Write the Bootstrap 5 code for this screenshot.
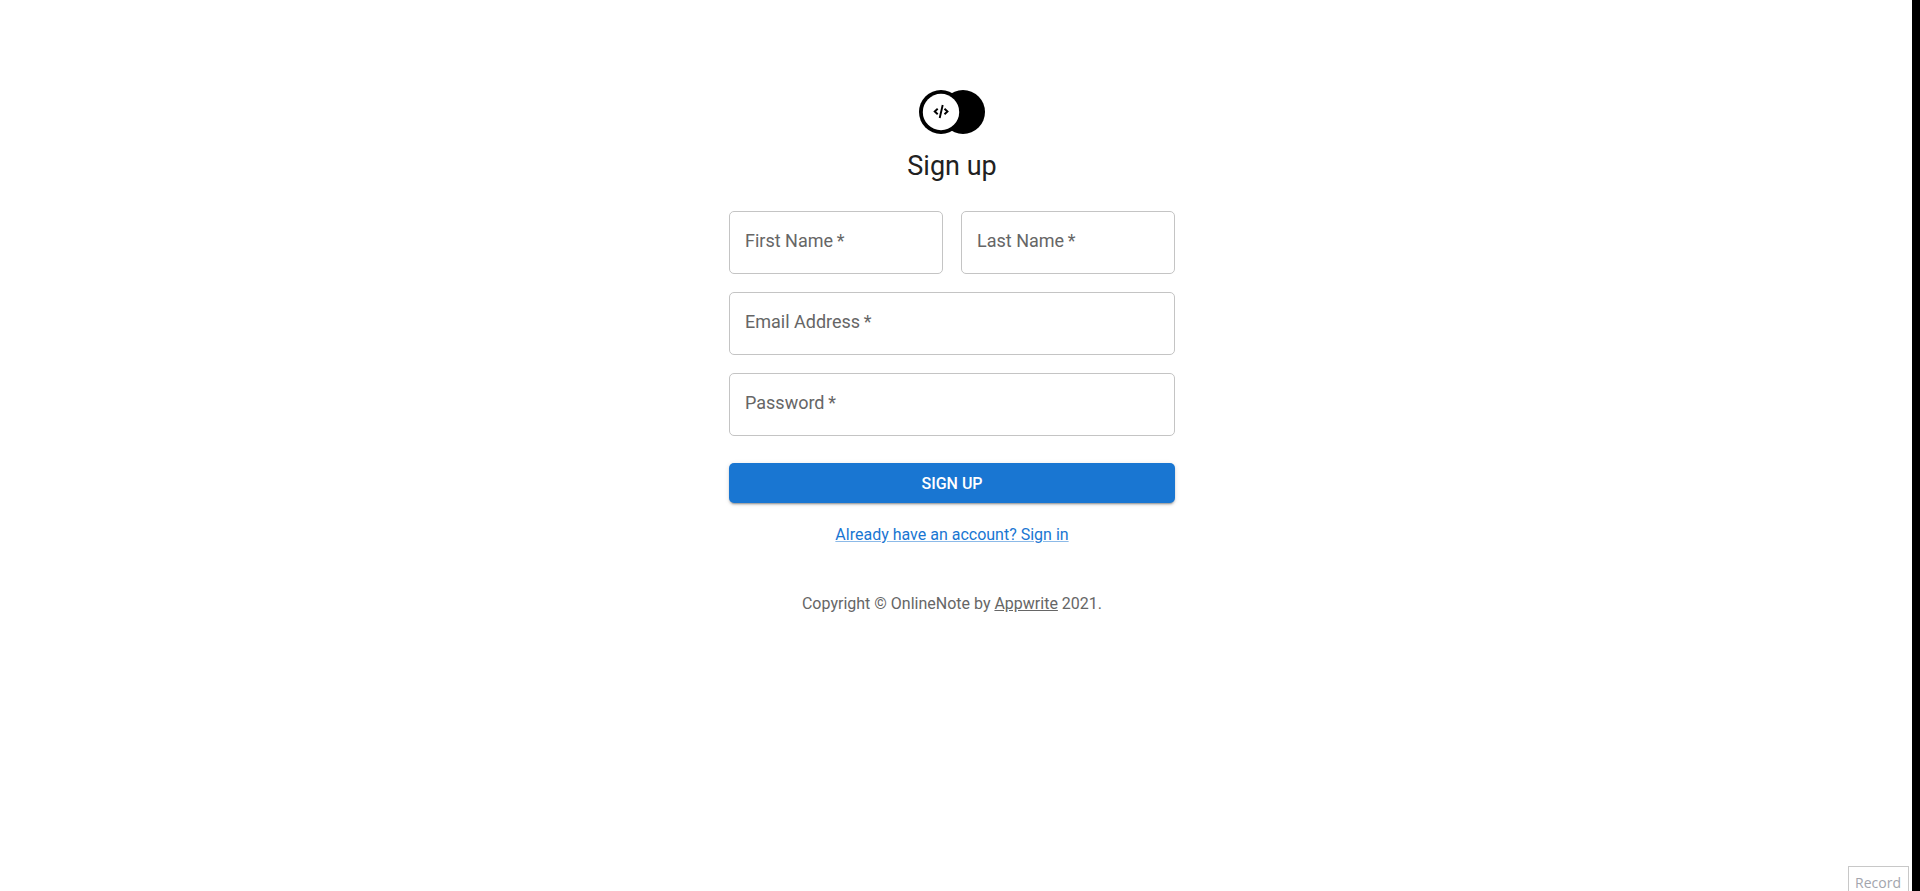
<!DOCTYPE html>
<html lang="en">
<head>
<meta charset="utf-8">
<meta name="viewport" content="width=device-width, initial-scale=1">
<title>Sign up</title>
<link href="https://cdn.jsdelivr.net/npm/bootstrap@5.3.0/dist/css/bootstrap.min.css" rel="stylesheet">
<style>
  body { font-family: Roboto, "Liberation Sans", sans-serif; font-size: 16px; line-height: 24px; color: #666; background: #fff; }
  .page { border-right: 8px solid #000; padding-right: 8px; overflow: hidden; }
  .signup { width: 100%; max-width: 446px; padding-top: 90px; }
  .logo { width: 66px; height: 44px; }
  h1 { font-size: 27px; line-height: 36px; font-weight: 400; color: #212121; margin: 14px 0 27px; }
  .fields { --bs-gutter-x: 18px; --bs-gutter-y: 18px; }
  .form-floating > .form-control { height: 63px; min-height: 63px; padding: 24px 16px 8px; border: 1px solid #c4c4c4; border-radius: 5px; box-shadow: none; font-size: 18px; }
  .form-floating > label { padding: 17px 16px; border: 0; font-size: 18px; line-height: 26px; color: #666; }
  .btn-signup { height: 40px; margin: 27px 0 20px; padding: 2px 0 0; border: 0; border-radius: 5px; font-size: 16px; line-height: 24px; font-weight: 500; color: #fff; background: #1976d2;
    box-shadow: 0 3px 1px -2px rgba(0,0,0,.2), 0 2px 2px 0 rgba(0,0,0,.14), 0 1px 5px 0 rgba(0,0,0,.12); }
  .btn-signup:hover { background: #1565c0; color: #fff; }
  .signin { color: #1976d2; text-decoration-color: rgba(25,118,210,.5); }
  footer { margin-top: 45px; }
  footer a { color: inherit; }
  .record { right: 3px; bottom: 0; padding: 8px 7px 0 6px; border: 1px solid #c8c8c8; border-bottom: 0; background: #fff; color: #a3a5ad; font: 14px/16px "Open Sans", sans-serif; }
</style>
</head>
<body>
<div class="page position-relative min-vh-100">
  <main class="signup mx-auto d-flex flex-column align-items-center">
    <svg class="logo" viewBox="0 0 66 44" aria-hidden="true">
      <circle cx="44" cy="22" r="22"/>
      <circle cx="22" cy="22" r="22"/>
      <circle cx="22" cy="22" r="18.2" fill="#fff"/>
      <g fill="none" stroke="#000" stroke-width="1.9"><path d="M18.7 18.7 15.7 21.5l3 2.8M25.5 18.7l3 2.8-3 2.8M23.7 15 20.7 28"/></g>
    </svg>
    <h1>Sign up</h1>
    <form class="w-100">
      <div class="row fields">
        <div class="col-6"><div class="form-floating">
          <input class="form-control" id="first" type="text" placeholder=" " required>
          <label for="first">First Name&thinsp;*</label>
        </div></div>
        <div class="col-6"><div class="form-floating">
          <input class="form-control" id="last" type="text" placeholder=" " required>
          <label for="last">Last Name&thinsp;*</label>
        </div></div>
        <div class="col-12"><div class="form-floating">
          <input class="form-control" id="email" type="email" placeholder=" " required>
          <label for="email">Email Address&thinsp;*</label>
        </div></div>
        <div class="col-12"><div class="form-floating">
          <input class="form-control" id="password" type="password" placeholder=" " required>
          <label for="password">Password&thinsp;*</label>
        </div></div>
      </div>
      <button class="btn btn-signup w-100 text-uppercase" type="submit">Sign up</button>
    </form>
    <a class="signin" href="#">Already have an account? Sign in</a>
    <footer class="text-center">Copyright © OnlineNote by <a href="#">Appwrite</a> 2021.</footer>
  </main>
  <div class="record position-absolute">Record</div>
</div>
<script src="https://cdn.jsdelivr.net/npm/bootstrap@5.3.0/dist/js/bootstrap.bundle.min.js"></script>
</body>
</html>
